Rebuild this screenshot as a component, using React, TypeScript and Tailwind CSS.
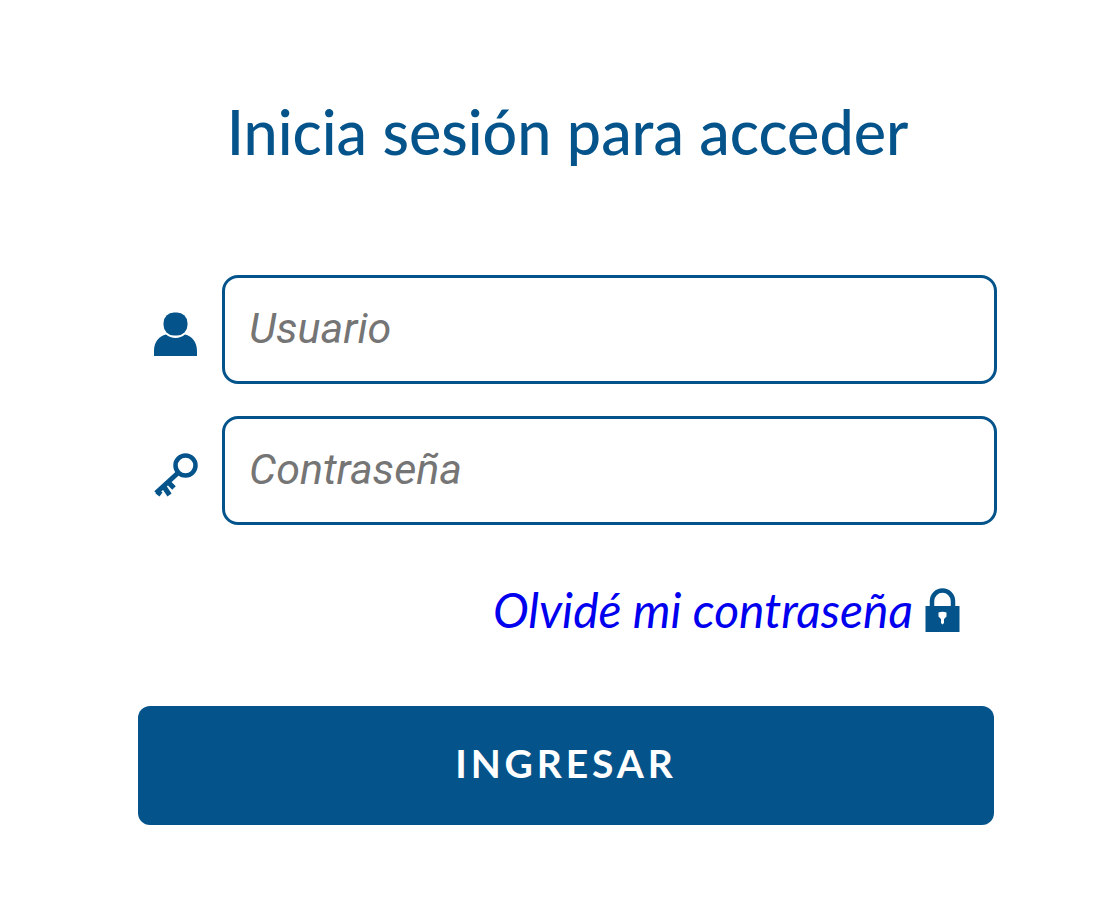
import type { ReactNode } from "react";

const UserIcon = () => (
  <svg viewBox="0 0 44 44" className="size-11 fill-[#04548b]" role="img" aria-label="Usuario">
    <rect x="9.500" y="0.5" width="24" height="23" rx="10.500" />
    <path d="M0 44v-5c0-9 5-15 12-16.500 5 4.500 14 4.500 19 0C38 24 43 30 43 39v5z" />
  </svg>
);

const KeyIcon = () => (
  <svg viewBox="0 0 44 44" className="size-11" fill="none" stroke="#04548b" role="img" aria-label="Contraseña">
    <circle cx="31.500" cy="12.5" r="10" strokeWidth="4.5" />
    <path d="M25 19 2 40" strokeWidth="5" />
    <path d="M14 29l6 6M9.500 33l6 9M3 38.500l4 3" strokeWidth="5" />
  </svg>
);

const LockIcon = () => (
  <svg viewBox="0 0 35 45" className="h-[45px] w-[35px] shrink-0" aria-hidden="true">
    <path d="M7 19v-6a10.500 10.500 0 0 1 21 0v6" fill="none" stroke="#04548b" strokeWidth="4.5" />
    <path d="M0.500 18h34v26h-34z" fill="#04548b" />
    <path d="M13.500 24.500q4-1.500 8 0v4l-2.500 2.500v4l-1.500 1.500-1.500-1.500v-4l-2.500-2.500z" fill="#fff" />
  </svg>
);

type FieldProps = { id: string; label: string; type: string; icon: ReactNode };

const Field = ({ id, label, type, icon }: FieldProps) => (
  <div className="flex items-center">
    <label htmlFor={id} className="flex w-[84px] shrink-0 pt-2 pl-4">
      {icon}
    </label>
    <input
      id={id}
      type={type}
      placeholder={label}
      className="h-[109px] min-w-0 flex-1 rounded-2xl border-3 border-[#04548b] bg-white px-6 pb-1 font-['Roboto',sans-serif] text-[43px] text-gray-700 outline-none placeholder:text-[#757575] placeholder:italic"
    />
  </div>
);

export default function App() {
  return (
    <main className="min-h-screen bg-white pt-[94px] pr-[97px] pb-[72px] pl-[138px] font-['Lato',sans-serif]">
      <h1 className="text-center text-[61px] leading-[76px] font-medium text-[#04548b]">
        Inicia sesión para acceder
      </h1>
      <form className="mt-[105px]" onSubmit={(event) => event.preventDefault()}>
        <div className="flex flex-col gap-8">
          <Field id="usuario" label="Usuario" type="text" icon={<UserIcon />} />
          <Field id="contrasena" label="Contraseña" type="password" icon={<KeyIcon />} />
        </div>
        <div className="mt-[57px] flex items-center justify-end gap-3 pr-[37px]">
          <a href="#recuperar" className="text-[48px] leading-[56px] text-[#0000ee] italic">
            Olvidé mi contraseña
          </a>
          <LockIcon />
        </div>
        <div className="mt-[68px] pr-[3px]">
          <button
            type="submit"
            className="h-[119px] w-full rounded-xl bg-[#04548b] pb-1 text-[39px] font-bold tracking-widest text-white"
          >
            INGRESAR
          </button>
        </div>
      </form>
    </main>
  );
}
